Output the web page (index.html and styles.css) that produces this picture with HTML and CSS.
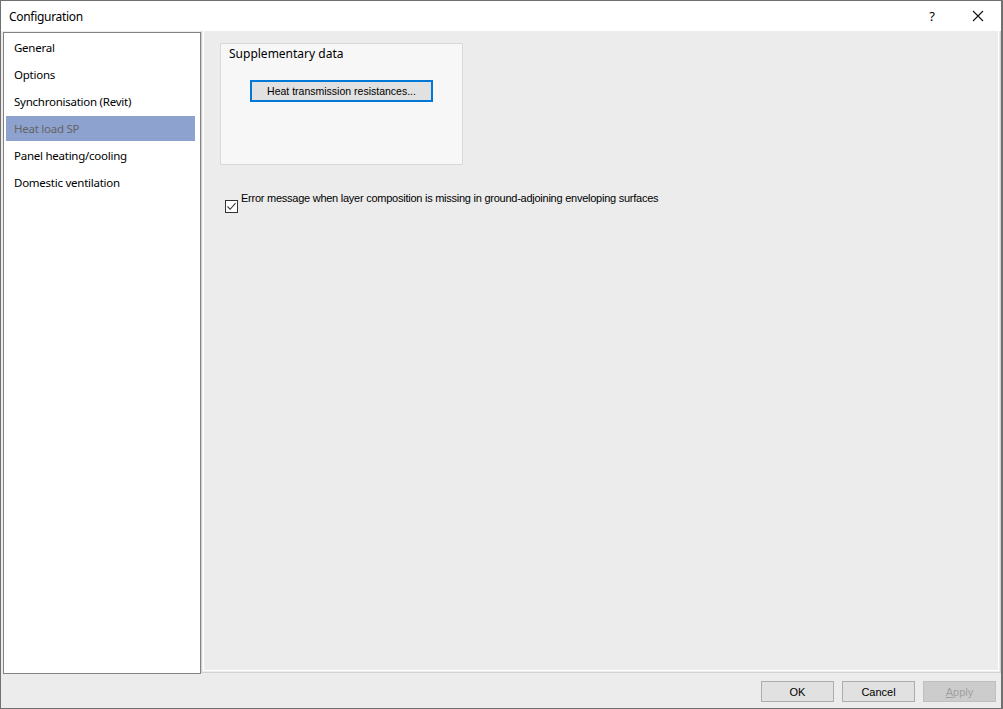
FILE: index.html
```html
<!DOCTYPE html>
<html>
<head>
<meta charset="utf-8">
<link rel="stylesheet" href="styles.css">
</head>
<body>
<div class="window">
  <div class="titlebar">
    <span class="title">Configuration</span>
    <span class="help">?</span>
    <span class="close"><svg width="12" height="12" viewBox="0 0 12 12"><path d="M1 1 L11 11 M11 1 L1 11" stroke="#111" stroke-width="1.1" fill="none"/></svg></span>
  </div>
  <div class="main">
    <ul class="nav">
      <li class="nav-item">General</li>
      <li class="nav-item">Options</li>
      <li class="nav-item">Synchronisation (Revit)</li>
      <li class="nav-item selected">Heat load SP</li>
      <li class="nav-item">Panel heating/cooling</li>
      <li class="nav-item">Domestic ventilation</li>
    </ul>
    <div class="panel">
      <div class="panel-inner">
        <div class="group">
          <div class="group-title">Supplementary data</div>
          <button class="btn-focus">Heat transmission resistances...</button>
        </div>
        <label class="check-row">
          <span class="checkbox"><svg width="11" height="11" viewBox="0 0 11 11"><path d="M1.5 5.5 L4.2 8.3 L9.5 2.2" stroke="#333" stroke-width="1.1" fill="none"/></svg></span>
          <span class="check-label">Error message when layer composition is missing in ground-adjoining enveloping surfaces</span>
        </label>
      </div>
    </div>
  </div>
  <div class="footer">
    <button class="btn">OK</button>
    <button class="btn">Cancel</button>
    <button class="btn disabled"><u>A</u>pply</button>
  </div>
</div>
</body>
</html>
```
FILE: styles.css
```css
html, body {
  margin: 0;
  padding: 0;
}
body {
  width: 1003px;
  height: 709px;
  overflow: hidden;
  background: #ffffff;
}
.window {
  box-sizing: border-box;
  width: 1003px;
  height: 709px;
  border: 1px solid #707070;
  border-right-width: 2px;
  background: #ececec;
  display: flex;
  flex-direction: column;
}
.titlebar {
  height: 30px;
  flex: none;
  background: #ffffff;
  display: flex;
  align-items: center;
  font-family: "Noto Sans", sans-serif;
  font-size: 12px;
  color: #000;
}
.title {
  margin-left: 8px;
  flex: 1;
  letter-spacing: -0.3px;
}
.help {
  width: 16px;
  text-align: center;
  margin-right: 31px;
  font-size: 13px;
}
.close {
  width: 14px;
  display: flex;
  justify-content: center;
  margin-right: 16px;
}
.main {
  flex: 1;
  display: flex;
  padding: 1px 0 0 2px;
  min-height: 0;
}
.nav {
  list-style: none;
  margin: 0;
  padding: 2px 5px 0 2px;
  box-sizing: border-box;
  width: 198px;
  height: 642px;
  border: 1px solid #828282;
  background: #ffffff;
  font-family: "Noto Sans", sans-serif;
  font-size: 11.5px;
  letter-spacing: -0.25px;
  color: #000;
}
.nav-item {
  height: 25px;
  line-height: 25px;
  margin-bottom: 2px;
  padding-left: 8px;
  white-space: nowrap;
}
.nav-item.selected {
  background: #8ea2cf;
  color: #646464;
}
.panel {
  flex: 1;
  height: 642px;
  box-sizing: border-box;
  border-left: 1px solid #d2d2d2;
  border-bottom: 1px solid #d2d2d2;
  border-right: 1px solid #d2d2d2;
  padding: 0 1px 1px 1px;
  margin-top: -1px;
}
.panel-inner {
  height: 100%;
  box-sizing: border-box;
  border-left: 1px solid #ffffff;
  border-bottom: 1px solid #ffffff;
  border-right: 1px solid #ffffff;
  background: #ececec;
  padding: 12px 0 0 16px;
}
.group {
  box-sizing: border-box;
  width: 243px;
  height: 122px;
  border: 1px solid #d9d9d9;
  background: #f7f7f7;
  padding: 2px 0 0 8px;
}
.group-title {
  font-family: "Noto Sans", sans-serif;
  font-size: 12px;
  color: #000;
  line-height: 16px;
}
.btn-focus {
  display: block;
  box-sizing: border-box;
  margin: 18px 0 0 21px;
  width: 183px;
  height: 22px;
  border: 2px solid #0078d7;
  background: #e1e1e1;
  font-family: "Liberation Sans", Arial, sans-serif;
  font-size: 10.5px;
  color: #000;
  padding: 0;
}
.check-row {
  display: flex;
  align-items: flex-start;
  margin: 27px 0 0 5px;
}
.checkbox {
  box-sizing: border-box;
  width: 13px;
  height: 13px;
  margin-top: 8px;
  border: 1px solid #333333;
  background: #ffffff;
  display: flex;
  align-items: center;
  justify-content: center;
}
.check-label {
  margin-left: 3px;
  font-family: "Liberation Sans", Arial, sans-serif;
  font-size: 11px;
  letter-spacing: -0.25px;
  color: #000;
  line-height: 13px;
}
.footer {
  height: 34px;
  flex: none;
  display: flex;
  justify-content: flex-end;
  align-items: flex-start;
  gap: 8px;
  padding: 7px 5px 0 0;
  box-sizing: border-box;
  background: #ececec;
}
.btn {
  box-sizing: border-box;
  width: 73px;
  height: 21px;
  border: 1px solid #adadad;
  background: #e1e1e1;
  font-family: "Liberation Sans", Arial, sans-serif;
  font-size: 11px;
  color: #000;
  padding: 0;
}
.btn.disabled {
  background: #cccccc;
  border-color: #bfbfbf;
  color: #a0a0a0;
}
```
